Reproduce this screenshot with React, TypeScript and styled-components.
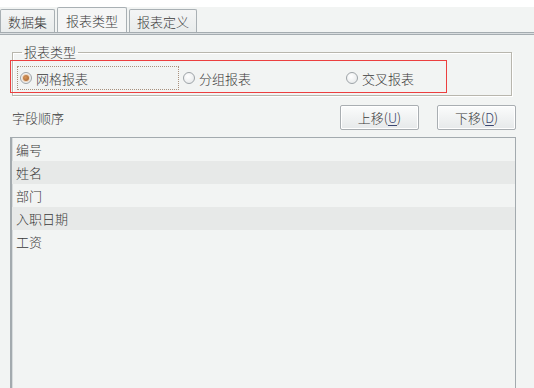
import React from "react";
import styled, { createGlobalStyle } from "styled-components";

const Global = createGlobalStyle`
  html, body { margin: 0; padding: 0; background: #f2f4f3; }
  body { font-family: "Noto Sans CJK SC", "Noto Sans", sans-serif; }
`;

const Page = styled.div`
  position: relative;
  width: 534px;
  height: 388px;
  overflow: hidden;
  background: #f2f4f3;
  color: #3a3a3a;
  font-size: 13px;
  font-weight: 300;
`;

const TopBand = styled.div`
  height: 7px;
  background: #ffffff;
`;

const TabStrip = styled.div`
  display: flex;
  align-items: flex-end;
  gap: 2px;
  height: 25px;
`;

const Tab = styled.div<{ $active?: boolean }>`
  box-sizing: border-box;
  height: ${(p) => (p.$active ? 25 : 23)}px;
  padding: 0 ${(p) => (p.$active ? 8 : 7)}px;
  display: flex;
  align-items: center;
  border: 1px solid #a9b0b4;
  border-bottom: none;
  border-radius: 2px 2px 0 0;
  background: ${(p) =>
    p.$active ? "#f5f6f6" : "linear-gradient(#f4f5f5, #e9ecec)"};
  line-height: 1;
  white-space: nowrap;
`;

const TabRule = styled.div`
  height: 1px;
  background: #d9dddf;
  border-top: 1px solid #a5acb0;
  border-bottom: 1px solid #a5acb0;
`;

const Body = styled.div`
  padding: 9px 18px 0 10px;
`;

const GroupBox = styled.fieldset`
  margin: 0 0 0 2px;
  padding: 6px 4px 5px 4px;
  width: 500px;
  box-sizing: border-box;
  border: 1px solid #b8b6ad;
  box-shadow: 1px 1px 0 #ffffff, inset 1px 1px 0 #ffffff;
`;

const Legend = styled.legend`
  padding: 0 2px;
  margin-left: 5px;
  line-height: 16px;
  font-size: 13px;
`;

const RadioRow = styled.div`
  display: grid;
  grid-template-columns: 163px 163px 163px;
  height: 24px;
`;

const RadioItem = styled.label<{ $focused?: boolean }>`
  display: flex;
  align-items: center;
  gap: 4px;
  box-sizing: border-box;
  padding-left: 2px;
  border: 1px ${(p) => (p.$focused ? "dotted #a8907c" : "solid transparent")};
  width: ${(p) => (p.$focused ? "162px" : "auto")};
`;

const RadioDot = styled.span<{ $checked?: boolean }>`
  position: relative;
  width: 12px;
  height: 12px;
  box-sizing: border-box;
  border-radius: 50%;
  border: 1px solid #9ea4a8;
  background: radial-gradient(circle at 40% 35%, #ffffff, #e3e6e7);
  &::after {
    content: "";
    display: ${(p) => (p.$checked ? "block" : "none")};
    position: absolute;
    left: 2px;
    top: 2px;
    width: 6px;
    height: 6px;
    border-radius: 50%;
    background: radial-gradient(circle at 40% 40%, #d6955a, #a4602a);
    box-shadow: 0 0 0 1px #efd7bf;
  }
`;

const Highlight = styled.div`
  position: absolute;
  left: 10px;
  top: 60px;
  width: 437px;
  height: 33px;
  box-sizing: border-box;
  border: 1px solid #ec3f3f;
  pointer-events: none;
`;

const OrderBar = styled.div`
  display: flex;
  align-items: center;
  height: 25px;
  margin-top: 9px;
  padding-left: 2px;
`;

const OrderLabel = styled.span`
  flex: 1;
`;

const Buttons = styled.div`
  display: flex;
  gap: 18px;
`;

const Button = styled.button`
  box-sizing: border-box;
  width: 79px;
  height: 25px;
  border: 1px solid #a9aeb2;
  border-radius: 2px;
  background: linear-gradient(#fbfcfc, #e6e9ea);
  font-family: inherit;
  font-size: 13px;
  font-weight: 300;
  color: #3a3a3a;
  padding: 0;
  line-height: 1;
  box-shadow: inset 0 0 0 1px #ffffff;
`;

const Key = styled.u`
  text-underline-offset: 2px;
  color: #3a4670;
`;

const FieldList = styled.div`
  margin-top: 7px;
  height: 260px;
  border: 1px solid #a3aaae;
  border-left: 2px solid #a3aaae;
  box-shadow: inset 1px 0 0 #d8dcdd;
  background: #f2f4f3;
`;

const Row = styled.div<{ $alt?: boolean }>`
  height: 23px;
  line-height: 23px;
  padding-left: 4px;
  background: ${(p) => (p.$alt ? "#e7e9e8" : "transparent")};
`;

const fields = ["编号", "姓名", "部门", "入职日期", "工资"];

export default function App() {
  return (
    <>
      <Global />
      <Page>
        <TopBand />
        <TabStrip>
          <Tab>数据集</Tab>
          <Tab $active>报表类型</Tab>
          <Tab>报表定义</Tab>
        </TabStrip>
        <TabRule />
        <Body>
          <GroupBox>
            <Legend>报表类型</Legend>
            <RadioRow>
              <RadioItem $focused>
                <RadioDot $checked />
                网格报表
              </RadioItem>
              <RadioItem>
                <RadioDot />
                分组报表
              </RadioItem>
              <RadioItem>
                <RadioDot />
                交叉报表
              </RadioItem>
            </RadioRow>
          </GroupBox>
          <OrderBar>
            <OrderLabel>字段顺序</OrderLabel>
            <Buttons>
              <Button>
                上移(<Key>U</Key>)
              </Button>
              <Button>
                下移(<Key>D</Key>)
              </Button>
            </Buttons>
          </OrderBar>
          <FieldList>
            {fields.map((f, i) => (
              <Row key={f} $alt={i % 2 === 1}>
                {f}
              </Row>
            ))}
          </FieldList>
        </Body>
        <Highlight />
      </Page>
    </>
  );
}
